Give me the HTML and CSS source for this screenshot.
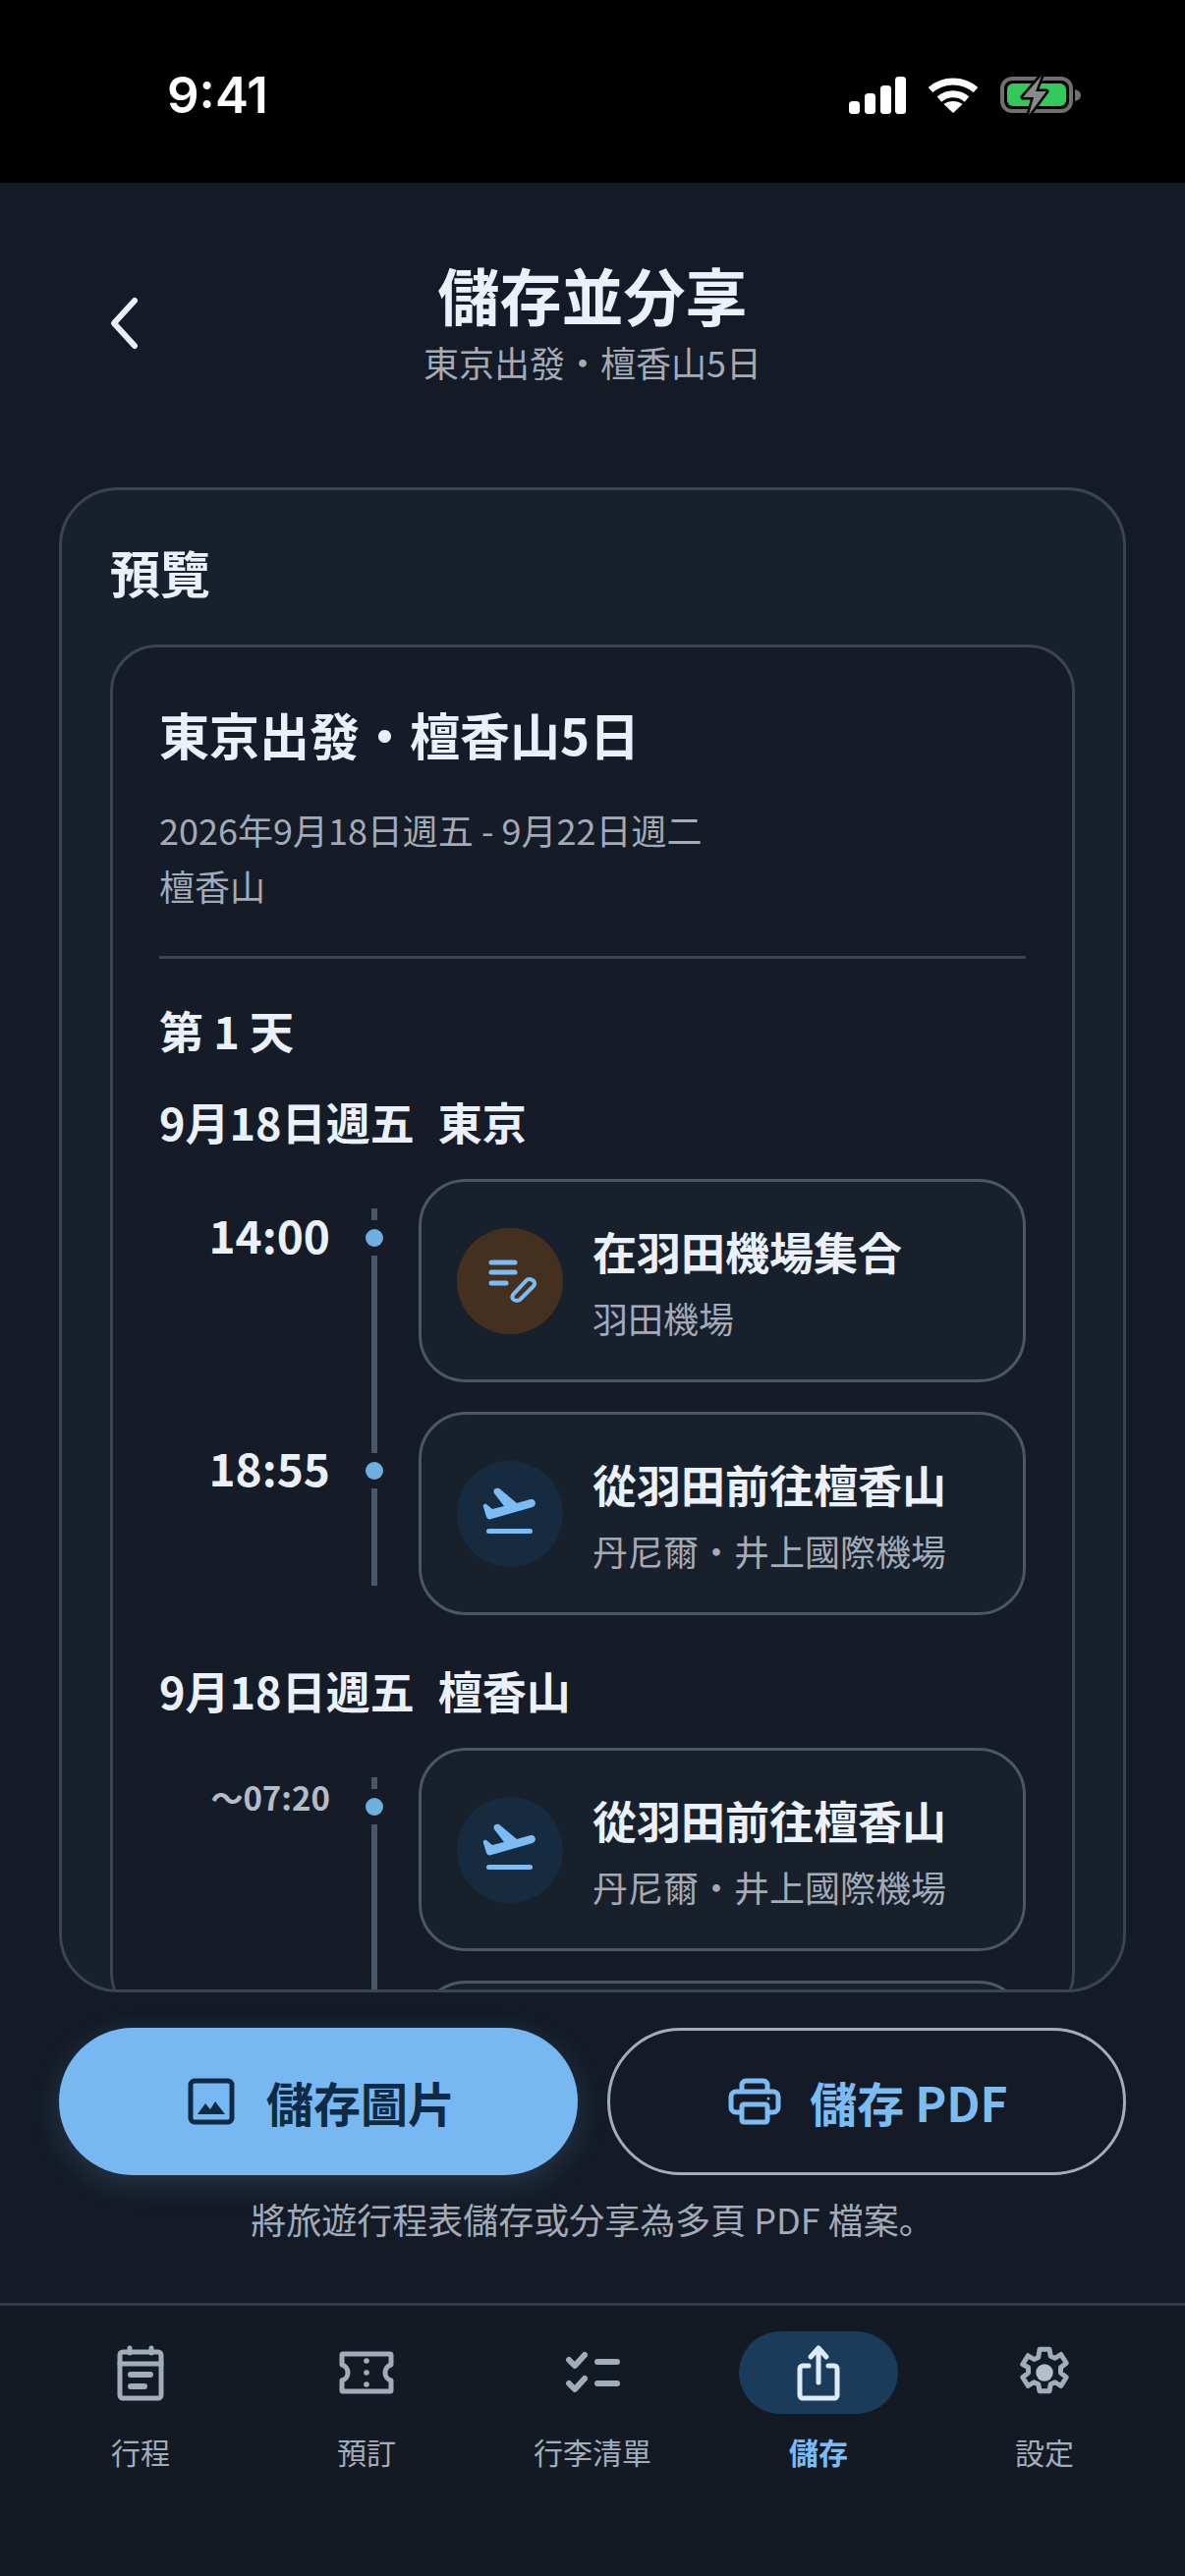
FILE: index.html
```html
<!DOCTYPE html>
<html>
<head>
    <meta charset="UTF-8">
    <meta name="viewport" content="width=device-width, initial-scale=1.0">
    <title>儲存並分享</title>
    <link rel="stylesheet" href="styles.css">
</head>
<body>
    <div class="screen">
        <div class="status-bar">
            <span class="clock">9:41</span>
            <div class="status-icons">
                <svg width="58" height="38" viewBox="0 0 58 38"><rect x="0" y="25" width="11" height="13" rx="3.5" fill="#fff"/><rect x="16" y="17" width="11" height="21" rx="3.5" fill="#fff"/><rect x="32" y="9" width="11" height="29" rx="3.5" fill="#fff"/><rect x="47" y="0" width="11" height="38" rx="3.5" fill="#fff"/></svg>
                <svg width="52" height="38" viewBox="0 0 52 38"><path d="M3 13.5C16 2 36 2 49 13.5" fill="none" stroke="#fff" stroke-width="7"/><path d="M12 23c8-7 20-7 28 0" fill="none" stroke="#fff" stroke-width="7"/><path d="M16.500 28c5-4 14-4 19 0L26 37z" fill="#fff"/></svg>
                <svg width="82" height="40" viewBox="0 0 82 40"><rect x="2" y="3" width="70" height="33" rx="10" fill="none" stroke="#6f6f6f" stroke-width="4"/><rect x="7" y="8" width="60" height="23" rx="6" fill="#34c759"/><path d="M76 14c4 1 6 3 6 6s-2 5-6 6z" fill="#6f6f6f"/><path d="M42 0 23 22h11l-5 18 18-24H36z" fill="#8a8a8a" stroke="#000" stroke-width="5" stroke-linejoin="round" paint-order="stroke"/></svg>
            </div>
        </div>

        <header class="top-bar">
            <div class="back-cell">
                <svg width="36" height="56" viewBox="0 0 36 56"><path d="M29 5 8 28l21 23" fill="none" stroke="#e9f0fb" stroke-width="6" stroke-linecap="round" stroke-linejoin="round"/></svg>
            </div>
            <div class="top-titles">
                <h1>儲存並分享</h1>
                <p>東京出發・檀香山5日</p>
            </div>
        </header>

        <section class="preview">
            <h2 class="preview-label">預覽</h2>
            <div class="sheet">
                <div class="sheet-head">
                    <h3>東京出發・檀香山5日</h3>
                    <p>2026年9月18日週五 - 9月22日週二<br>檀香山</p>
                </div>
                <div class="day-title">第 1 天</div>

                <div class="date-title"><span>9月18日週五</span><span>東京</span></div>
                <div class="timeline">
                    <div class="stop">
                        <div class="stop-time">14:00</div>
                        <div class="rail"><i class="rail-top"></i><b></b><i class="rail-bottom"></i></div>
                        <div class="event">
                            <span class="event-icon note">
                                <svg width="60" height="60" viewBox="0 0 60 60" fill="none" stroke="#7cbcf5" stroke-width="5" stroke-linecap="round"><path d="M11 11h24M11 21h24M11 32h15"/><path d="M34 49c-2-1-2-3-1-5l14-15c2-2 4-1 6 0s3 4 1 6L40 49c-2 1-4 1-6 0z" stroke-width="4"/></svg>
                            </span>
                            <div class="event-text">
                                <strong>在羽田機場集合</strong>
                                <span>羽田機場</span>
                            </div>
                        </div>
                    </div>
                    <div class="stop">
                        <div class="stop-time">18:55</div>
                        <div class="rail rail-end"><i class="rail-top"></i><b></b><i class="rail-bottom"></i></div>
                        <div class="event">
                            <span class="event-icon">
                                <svg width="60" height="60" viewBox="0 0 60 60" fill="#7cbcf5"><path d="M3 23c-1-2 1-4 3-3l6 5 12-3-10-13c-2-4 2-6 5-5l18 15 14-4c5-1 7 6 2 8L11 35c-2 1-4 0-5-2z"/><rect x="6" y="45" width="47" height="5" rx="2.500"/></svg>
                            </span>
                            <div class="event-text">
                                <strong>從羽田前往檀香山</strong>
                                <span>丹尼爾・井上國際機場</span>
                            </div>
                        </div>
                    </div>
                </div>

                <div class="date-title second"><span>9月18日週五</span><span>檀香山</span></div>
                <div class="timeline">
                    <div class="stop">
                        <div class="stop-time small">〜07:20</div>
                        <div class="rail"><i class="rail-top"></i><b></b><i class="rail-bottom"></i></div>
                        <div class="event">
                            <span class="event-icon">
                                <svg width="60" height="60" viewBox="0 0 60 60" fill="#7cbcf5"><path d="M3 23c-1-2 1-4 3-3l6 5 12-3-10-13c-2-4 2-6 5-5l18 15 14-4c5-1 7 6 2 8L11 35c-2 1-4 0-5-2z"/><rect x="6" y="45" width="47" height="5" rx="2.500"/></svg>
                            </span>
                            <div class="event-text">
                                <strong>從羽田前往檀香山</strong>
                                <span>丹尼爾・井上國際機場</span>
                            </div>
                        </div>
                    </div>
                    <div class="stop">
                        <div class="stop-time"></div>
                        <div class="rail"><i class="rail-top"></i></div>
                        <div class="event"></div>
                    </div>
                </div>
            </div>
        </section>

        <div class="actions">
            <button class="btn btn-primary">
                <svg width="48" height="48" viewBox="0 0 48 48"><rect x="3" y="3" width="42" height="42" rx="4" fill="none" stroke="#0f2a44" stroke-width="5"/><path d="M10 37l8-11 5 6 5-8 10 13z" fill="#0f2a44"/></svg>
                儲存圖片
            </button>
            <button class="btn btn-outline">
                <svg width="54" height="48" viewBox="0 0 54 48" fill="none" stroke="#7cbcf5" stroke-width="5" stroke-linejoin="round"><path d="M14 14V7a4 4 0 0 1 4-4h18a4 4 0 0 1 4 4v7"/><path d="M14 35H8a5 5 0 0 1-5-5V19a5 5 0 0 1 5-5h38a5 5 0 0 1 5 5v11a5 5 0 0 1-5 5h-6"/><rect x="14" y="27" width="26" height="18" rx="2"/><circle cx="41" cy="21" r="1.500" fill="#7cbcf5" stroke="none"/></svg>
                儲存 PDF
            </button>
        </div>
        <p class="hint">將旅遊行程表儲存或分享為多頁 PDF 檔案。</p>

        <nav class="tabs">
            <div class="tab">
                <span class="tab-icon">
                    <svg width="60" height="60" viewBox="0 0 60 60" fill="none" stroke="#a3adba" stroke-width="5" stroke-linejoin="round" stroke-linecap="round"><rect x="9" y="9" width="42" height="47" rx="3"/><path d="M9 21h42M19 5v5M41 5v5"/><path d="M20 32h20M20 44h14" stroke-width="6"/></svg>
                </span>
                <label>行程</label>
            </div>
            <div class="tab">
                <span class="tab-icon">
                    <svg width="60" height="60" viewBox="0 0 60 60"><path d="M6 11h48a1 1 0 0 1 1 1v10c-8 2-8 14 0 16v10a1 1 0 0 1-1 1H6a1 1 0 0 1-1-1V38c8-2 8-14 0-16V12a1 1 0 0 1 1-1z" fill="none" stroke="#a3adba" stroke-width="5" stroke-linejoin="round"/><circle cx="30" cy="18" r="2.800" fill="#a3adba"/><circle cx="30" cy="30" r="2.800" fill="#a3adba"/><circle cx="30" cy="42" r="2.800" fill="#a3adba"/></svg>
                </span>
                <label>預訂</label>
            </div>
            <div class="tab">
                <span class="tab-icon">
                    <svg width="60" height="60" viewBox="0 0 60 60" fill="none" stroke="#a3adba" stroke-width="6" stroke-linecap="round" stroke-linejoin="round"><path d="M6 17l6 6 10-11M6 41l6 6 10-11"/><path d="M35 19h20M35 41h20"/></svg>
                </span>
                <label>行李清單</label>
            </div>
            <div class="tab active">
                <span class="tab-icon">
                    <svg width="60" height="60" viewBox="0 0 60 60" fill="none" stroke="#dcebfb" stroke-width="5" stroke-linecap="round" stroke-linejoin="round"><path d="M20 23h-6a3 3 0 0 0-3 3v27a3 3 0 0 0 3 3h32a3 3 0 0 0 3-3V26a3 3 0 0 0-3-3h-6"/><path d="M30 40V6M22 14l8-9 8 9"/></svg>
                </span>
                <label>儲存</label>
            </div>
            <div class="tab">
                <span class="tab-icon">
                    <svg width="60" height="60" viewBox="0 0 24 24" fill="none" stroke="#a3adba" stroke-width="2" stroke-linejoin="round"><path d="M10 2.500h4l.5 2.800 1.800.8 2.400-1.500 2.200 3.500-2.300 1.800v2.200l2.300 1.800-2.200 3.500-2.400-1.500-1.800.8-.5 2.800h-4l-.5-2.800-1.800-.8-2.400 1.500-2.200-3.500 2.300-1.800v-2.200L3.100 8.600l2.200-3.500 2.400 1.500 1.800-.8z"/><circle cx="12" cy="12" r="3.500" fill="#b4bdca" stroke="none"/></svg>
                </span>
                <label>設定</label>
            </div>
        </nav>
    </div>
</body>
</html>
```

FILE: styles.css
```css
* {
    box-sizing: border-box;
}

body {
    margin: 0;
    background: #141b26;
    font-family: "Noto Sans CJK JP", "Noto Sans", sans-serif;
    color: #eaf1fb;
}

h1, h2, h3, p {
    margin: 0;
}

.screen {
    width: 1206px;
    height: 2622px;
    display: flex;
    flex-direction: column;
    overflow: hidden;
}

/* status bar */
.status-bar {
    height: 186px;
    flex: none;
    background: #000;
    display: flex;
    justify-content: space-between;
    align-items: flex-start;
    padding: 64px 106px 0 170px;
}

.clock {
    font-family: Inter, sans-serif;
    font-weight: 600;
    font-size: 51px;
    line-height: 66px;
    color: #fff;
}

.status-icons {
    display: flex;
    align-items: center;
    gap: 22px;
    height: 66px;
}

/* header */
.top-bar {
    height: 310px;
    flex: none;
    display: grid;
    grid-template-columns: 1fr auto 1fr;
    align-items: start;
    padding-top: 69px;
}

.back-cell {
    padding: 46px 0 0 108px;
}

.top-titles {
    text-align: center;
}

.top-titles h1 {
    font-size: 63px;
    font-weight: 700;
    line-height: 87px;
}

.top-titles p {
    font-size: 36px;
    line-height: 52px;
    color: #a3abb8;
}

/* preview card */
.preview {
    height: 1532px;
    flex: none;
    margin: 0 60px;
    padding: 53px 49px 0;
    border: 3px solid #3b4452;
    border-radius: 60px;
    background: #18202c;
    overflow: hidden;
}

.preview-label {
    font-size: 51px;
    font-weight: 700;
    line-height: 60px;
}

.sheet {
    margin-top: 44px;
    height: 1400px;
    padding: 50px 47px 0;
    border: 3px solid #3b4452;
    border-radius: 48px;
    background: #151c27;
}

.sheet-head {
    padding-bottom: 43px;
    border-bottom: 3px solid #3b4452;
}

.sheet-head h3 {
    font-size: 51px;
    font-weight: 700;
    line-height: 76px;
}

.sheet-head p {
    margin-top: 31px;
    font-size: 36px;
    line-height: 57px;
    color: #a3abb8;
}

.day-title {
    margin-top: 39px;
    font-size: 45px;
    font-weight: 700;
    line-height: 68px;
}

.date-title {
    display: flex;
    gap: 24px;
    margin-top: 25px;
    font-size: 45px;
    font-weight: 700;
    line-height: 68px;
}

.date-title.second {
    margin-top: 13px;
}

/* timeline */
.timeline {
    margin-top: 24px;
}

.stop {
    display: grid;
    grid-template-columns: 174px 90px 618px;
}

.stop-time {
    text-align: right;
    font-size: 46px;
    font-weight: 700;
    line-height: 68px;
    padding-top: 22px;
}

.stop-time.small {
    font-size: 33px;
    color: #b4bcc8;
    line-height: 52px;
    padding-top: 24px;
}

.rail {
    display: flex;
    flex-direction: column;
    align-items: center;
    padding-top: 30px;
}

.rail i {
    display: block;
    width: 6px;
    background: #4b5666;
}

.rail-top {
    height: 12px;
}

.rail b {
    display: block;
    width: 18px;
    height: 18px;
    margin: 9px 0;
    border-radius: 50%;
    background: #6cafe0;
}

.rail-bottom {
    flex: 1;
}

.rail-end {
    padding-bottom: 60px;
}

.stop + .stop .rail {
    padding-top: 0;
}

.stop + .stop .rail .rail-top {
    height: 42px;
}

.event {
    height: 207px;
    margin-bottom: 30px;
    padding: 0 36px;
    display: flex;
    align-items: center;
    gap: 30px;
    border: 3px solid #4b5666;
    border-radius: 48px;
    background: #18202c;
}

.event-icon {
    width: 108px;
    height: 108px;
    flex: none;
    border-radius: 50%;
    background: #172b40;
    display: flex;
    align-items: center;
    justify-content: center;
}

.event-icon.note {
    background: #44301f;
}

.event-text strong {
    display: block;
    font-size: 45px;
    font-weight: 700;
    line-height: 66px;
    white-space: nowrap;
}

.event-text span {
    display: block;
    margin-top: 8px;
    font-size: 36px;
    line-height: 52px;
    color: #a3abb8;
    white-space: nowrap;
}

/* actions */
.actions {
    flex: none;
    display: grid;
    grid-template-columns: 1fr 1fr;
    gap: 30px;
    margin: 36px 60px 0;
}

.btn {
    height: 150px;
    border-radius: 75px;
    display: flex;
    align-items: center;
    justify-content: center;
    gap: 32px;
    font-family: inherit;
    font-size: 48px;
    font-weight: 700;
}

.btn-primary {
    padding-left: 12px;
    border: none;
    background: #78b8f2;
    color: #0f2a44;
    box-shadow: 0 8px 30px rgba(120, 184, 242, 0.18);
}

.btn-outline {
    gap: 29px;
    padding-left: 9px;
    border: 3px solid #a3adba;
    background: transparent;
    color: #7cbcf5;
}

.hint {
    flex: none;
    margin-top: 18px;
    text-align: center;
    font-size: 36px;
    line-height: 52px;
    color: #a3abb8;
}

/* bottom tabs */
.tabs {
    flex: 1;
    margin-top: 60px;
    padding: 26px 28px 0;
    display: grid;
    grid-template-columns: repeat(5, 230px);
    align-content: start;
    border-top: 3px solid #343c4b;
    background: #131a24;
}

.tab {
    display: flex;
    flex-direction: column;
    align-items: center;
}

.tab-icon {
    width: 162px;
    height: 84px;
    border-radius: 42px;
    display: flex;
    align-items: center;
    justify-content: center;
}

.tab.active .tab-icon {
    background: #1a3b5a;
}

.tab label {
    margin-top: 16px;
    font-size: 30px;
    line-height: 44px;
    color: #a3adba;
}

.tab.active label {
    font-weight: 700;
    color: #7cbcf5;
}
```
